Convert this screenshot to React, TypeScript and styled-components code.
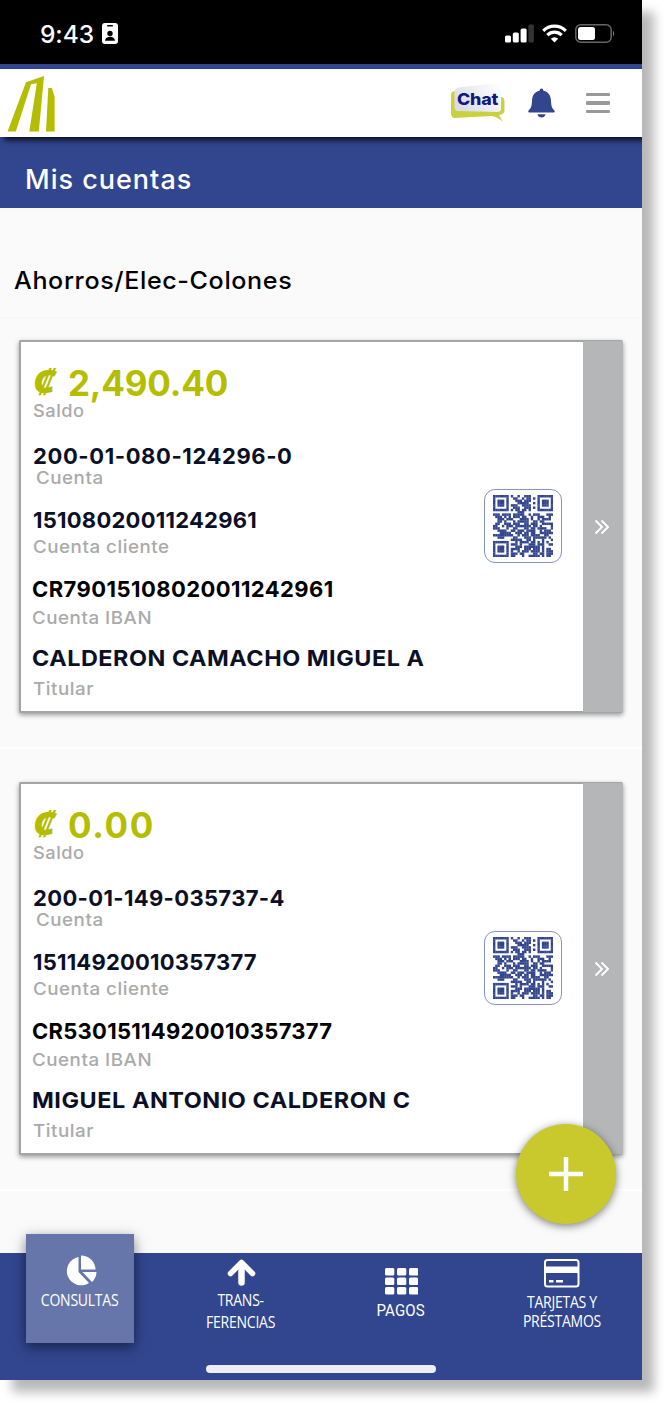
import React from 'react';
import styled, { createGlobalStyle } from 'styled-components';

const GlobalStyle = createGlobalStyle`
  * { box-sizing: border-box; }
  body { margin: 0; background: #fff; font-family: Inter, "Liberation Sans", sans-serif; overflow: hidden; }
`;

const BLUE = '#32458f';
const LIME = '#b5bd00';

const Stage = styled.div`
  width: 666px;
  height: 1404px;
`;

const Phone = styled.main`
  position: relative;
  display: flex;
  flex-direction: column;
  width: 642px;
  height: 1380px;
  background: #fafafa;
  box-shadow: 12px 12px 10px rgba(0, 0, 0, 0.28);
`;

const StatusBar = styled.div`
  display: flex;
  align-items: center;
  height: 64px;
  padding: 3px 26px 0 40px;
  background: #000;
  color: #fff;
`;

const Clock = styled.span`
  font-size: 24.5px;
  font-weight: 500;
  letter-spacing: -0.1px;
  width: 62px;
  white-space: nowrap;
`;

const StatusIcons = styled.div`
  display: flex;
  align-items: center;
  gap: 8px;
  margin-left: auto;
`;

const Header = styled.header`
  position: relative;
  z-index: 1;
  display: flex;
  align-items: center;
  height: 73px;
  padding: 0 31px 0 7px;
  border-top: 5px solid ${BLUE};
  background: #fff;
  box-shadow: 4px 3px 6px rgba(0, 0, 0, 0.85);
  clip-path: inset(0 0 -14px 0);
`;

const HeaderActions = styled.div`
  display: flex;
  align-items: center;
  margin-left: auto;
`;

const ChatBadge = styled.div`
  position: relative;
  width: 54px;
  height: 40px;
  margin-right: 23px;
`;

const ChatLabel = styled.span`
  position: absolute;
  left: 6px;
  top: 6px;
  font-size: 16.5px;
  line-height: 20px;
  font-weight: 800;
  letter-spacing: -0.2px;
  transform: scaleX(1.08);
  transform-origin: left;
  color: #10197c;
`;

const Burger = styled.div`
  display: grid;
  gap: 5px;
  width: 24px;
  margin-left: 31px;
  margin-right: 1px;
  span { height: 3.5px; border-radius: 1px; background: #999; }
`;

const TitleBar = styled.h1`
  display: flex;
  align-items: center;
  height: 71px;
  margin: 0;
  padding: 13px 0 0 25px;
  background: ${BLUE};
  color: #fff;
  font-size: 27px;
  font-weight: 500;
  letter-spacing: 1px;
`;

const SectionTitle = styled.h2`
  display: flex;
  align-items: center;
  height: 110px;
  margin: 0 0 22px;
  padding: 35px 0 0 14px;
  border-bottom: 1px solid #f5f5f5;
  color: #000;
  font-size: 24px;
  font-weight: 500;
  letter-spacing: 0.6px;
`;

const Stretch = styled.span<{ $scale: number }>`
  display: inline-block;
  transform: scaleX(${(p) => p.$scale});
  transform-origin: left;
`;

const CardSlot = styled.section`
  height: 442px;
  padding: 0 19px;
`;

const Divider = styled.hr`
  height: 2px;
  margin: 34px -19px 0;
  border: 0;
  background: #fff;
`;

const Card = styled.article`
  display: flex;
  height: 373px;
  border: 2px solid #a3a5a6;
  border-right: 0;
  border-radius: 2px;
  background: #fff;
  box-shadow: 0 2px 5px rgba(0, 0, 0, 0.4);
`;

const Details = styled.div`
  flex: 1;
  padding: 23px 0 0 10px;
`;

const Line = styled.div<{ $top?: number; $x?: number; $spacing?: number }>`
  margin-top: ${(p) => p.$top ?? 0}px;
  padding-left: ${(p) => p.$x ?? 0}px;
  letter-spacing: ${(p) => p.$spacing ?? 0}px;
  white-space: nowrap;
`;

const Balance = styled(Line)`
  display: flex;
  height: 36px;
  color: ${LIME};
  font-size: 35px;
  line-height: 36px;
  font-weight: 700;
`;

const Currency = styled.span`
  width: 36px;
  padding-left: 1px;
  font-family: "Noto Sans", sans-serif;
  font-size: 34px;
  line-height: 32px;
  font-style: italic;
  font-weight: 900;
  letter-spacing: 0;
`;

const Value = styled(Line)<{ $black?: boolean }>`
  height: 24px;
  color: ${(p) => (p.$black ? '#000' : '#0b1026')};
  font-size: 22px;
  line-height: 24px;
  font-weight: 700;
`;

const Caption = styled(Line)`
  height: 20px;
  color: #aaa;
  font-size: 17.5px;
  line-height: 20px;
  font-weight: 500;
`;

const QrButton = styled.div`
  display: grid;
  place-items: center;
  align-self: flex-start;
  width: 78px;
  height: 74px;
  margin: 147px 21px 0 0;
  border: 1px solid #8793c4;
  border-radius: 11px;
`;

const MoreStrip = styled.div`
  display: grid;
  place-items: center;
  width: 40px;
  background: #b5b6b8;
  margin: -1px 0;
  padding: 1px 2px 0 0;
`;

const Fab = styled.button`
  position: absolute;
  left: 516px;
  top: 1124px;
  display: grid;
  place-items: center;
  width: 100px;
  height: 100px;
  padding: 0;
  border: 0;
  border-radius: 50%;
  background: #c9c92e;
  box-shadow: 0 2px 9px rgba(0, 0, 0, 0.5);
`;

const Nav = styled.nav`
  display: flex;
  align-items: flex-start;
  height: 127px;
  margin-top: auto;
  background: ${BLUE};
`;

const NavItem = styled.div<{ $width: number; $top: number; $line?: number; $offset?: number }>`
  display: flex;
  flex-direction: column;
  align-items: center;
  width: ${(p) => p.$width}px;
  margin-left: ${(p) => p.$offset ?? 0}px;
  padding-top: ${(p) => p.$top}px;
  color: #fff;
  text-align: center;
  line-height: ${(p) => p.$line ?? 21.5}px;
`;

const ActiveItem = styled(NavItem)`
  height: 109px;
  margin: -19px 0 0 26px;
  background: #6776aa;
  box-shadow: 0 4px 12px rgba(0, 0, 0, 0.5);
`;

const NavLabel = styled.span<{ $gap: number; $roboto?: boolean }>`
  margin-top: ${(p) => p.$gap}px;
  font-family: ${(p) => (p.$roboto ? 'Roboto' : '"Open Sans"')}, sans-serif;
  font-size: 16.5px;
  transform: scaleX(${(p) => (p.$roboto ? 0.91 : 0.85)});
  letter-spacing: ${(p) => (p.$roboto ? '0.2px' : '-0.3px')};
  white-space: pre;
`;

const HomeIndicator = styled.div`
  position: absolute;
  left: 206px;
  bottom: 7px;
  width: 230px;
  height: 8px;
  border-radius: 4px;
  background: #efedf1;
`;

const QR_ROWS = [
  '111111101001001110001111111',
  '100000100110010110101000001',
  '101110100011101110001011101',
  '101110100001111100101011101',
  '101110101110011110001011101',
  '100000100111001110101000001',
  '111111101011011010001111111',
  '000000000001110000000000000',
  '111011110111110010111000111',
  '011101010111011001001110010',
  '001110111000111101001011110',
  '001101000101111100110110000',
  '011001110111001101110011111',
  '110010111011111110110100001',
  '111000100110001101101111001',
  '001111001101110111100101110',
  '000111110011101101100111111',
  '111111111001011101111001100',
  '001110000110001110111111010',
  '000000001111100110100010001',
  '111111100010111101101010100',
  '100000101110100011101110011',
  '101110100011101111111010000',
  '101110101111001110111010110',
  '101110101001011101111010111',
  '100000101110110000110110111',
  '111111101100010011111010110',
];

const QrCode = () => (
  <svg width="60" height="62" viewBox="0 0 27 27" preserveAspectRatio="none">
    {QR_ROWS.flatMap((row, y) =>
      [...row].map((cell, x) =>
        cell === '1' ? <rect key={`${x}-${y}`} x={x} y={y} width="1.08" height="1.08" fill={BLUE} /> : null,
      ),
    )}
  </svg>
);

type Row = { value: string; label: string; spacing: number; scale?: number; top: number; gap: number; x: number; lx: number; black?: boolean };
type Account = { balance: string; balanceSpacing: number; rows: Row[] };

const accounts: Account[] = [
  {
    balance: '2,490.40',
    balanceSpacing: -0.2,
    rows: [
      { value: '200-01-080-124296-0', label: 'Cuenta', spacing: 0.6, top: 23, gap: 0, x: 2, lx: 5 },
      { value: '15108020011242961', label: 'Cuenta cliente', spacing: 0.24, top: 20, gap: 5, x: 2, lx: 2 },
      { value: 'CR79015108020011242961', label: 'Cuenta IBAN', spacing: 0.43, top: 20, gap: 7, x: 1, lx: 1, black: true },
      { value: 'CALDERON CAMACHO MIGUEL A', label: 'Titular', spacing: 0.5, scale: 1.0625, top: 18, gap: 9, x: 1, lx: 2 },
    ],
  },
  {
    balance: '0.00',
    balanceSpacing: 1.6,
    rows: [
      { value: '200-01-149-035737-4', label: 'Cuenta', spacing: 0.35, top: 23, gap: 0, x: 2, lx: 5 },
      { value: '15114920010357377', label: 'Cuenta cliente', spacing: 0.2, top: 20, gap: 5, x: 2, lx: 2 },
      { value: 'CR53015114920010357377', label: 'Cuenta IBAN', spacing: 0.28, top: 20, gap: 7, x: 1, lx: 1, black: true },
      { value: 'MIGUEL ANTONIO CALDERON C', label: 'Titular', spacing: 0.5, scale: 1.065, top: 18, gap: 9, x: 1, lx: 2 },
    ],
  },
];

const AccountCard = ({ account }: { account: Account }) => (
  <CardSlot>
    <Card>
      <Details>
        <Balance $spacing={account.balanceSpacing} $x={1}>
          <Currency><Stretch $scale={1.1}>₡</Stretch></Currency>
          {account.balance}
        </Balance>
        <Caption $spacing={0.5} $x={2}><Stretch $scale={1.04}>Saldo</Stretch></Caption>
        {account.rows.map((row) => (
          <React.Fragment key={row.label}>
            <Value $top={row.top} $x={row.x} $spacing={row.spacing} $black={row.black}>
              <Stretch $scale={row.scale ?? 1}>{row.value}</Stretch>
            </Value>
            <Caption $top={row.gap} $x={row.lx} $spacing={0.5}>
              <Stretch $scale={1.07}>{row.label}</Stretch>
            </Caption>
          </React.Fragment>
        ))}
      </Details>
      <QrButton><QrCode /></QrButton>
      <MoreStrip>
        <svg width="16" height="16" viewBox="0 0 16 16" fill="none" stroke="#fff" strokeWidth="1.9">
          <path d="M1.5 1.5 8 8l-6.500 6.500M7.500 1.500 14 8l-6.500 6.500" />
        </svg>
      </MoreStrip>
    </Card>
    <Divider />
  </CardSlot>
);

export default function App() {
  return (
    <Stage>
      <GlobalStyle />
      <Phone>
        <StatusBar>
          <Clock>9:43</Clock>
          <svg width="16" height="21" viewBox="0 0 16 21">
            <rect width="16" height="21" rx="3" fill="#fff" />
            <rect x="5" y="2" width="6" height="1.500" rx=".7" fill="#000" />
            <circle cx="8" cy="10.500" r="2.700" fill="#000" />
            <path d="M3 17.800c.3-3 2.500-4 5-4s4.700 1 5 4z" fill="#000" />
          </svg>
          <StatusIcons>
            <svg width="29" height="19" viewBox="0 0 29 19" fill="#fff">
              <rect x="0" y="11.500" width="6" height="7" rx="1.500" />
              <rect x="7.800" y="8.500" width="6" height="10" rx="1.500" />
              <rect x="15.600" y="4.500" width="6" height="14" rx="1.500" />
              <rect x="23.400" y="0.500" width="5.500" height="18" rx="1.500" fill="#333" />
            </svg>
            <svg width="25" height="19" viewBox="0 0 25 19" fill="none" stroke="#fff" strokeWidth="3.200">
              <path d="M1.200 6.800a16 16 0 0 1 22.600 0" />
              <path d="M5.300 11.100a10.200 10.200 0 0 1 14.400 0" />
              <path d="M12.500 18.500 8.800 14.700a5.300 5.300 0 0 1 7.400 0z" fill="#fff" stroke="none" />
            </svg>
            <svg width="41" height="19" viewBox="0 0 41 19">
              <rect x=".8" y=".8" width="35.400" height="17.400" rx="5" fill="none" stroke="#666" strokeWidth="1.500" />
              <rect x="3" y="3" width="17" height="13" rx="2.500" fill="#fff" />
              <path d="M38 6.500q2.500 3 0 6z" fill="#777" />
            </svg>
          </StatusIcons>
        </StatusBar>
        <Header>
          <svg width="50" height="58" viewBox="0 0 50 58" fill={LIME}>
            <path fillRule="evenodd" d="M.5 57.500 19 8.200 37 2 31.800 57.500H22.300L29.800 9.200 24 10.300 8.800 57.500z" />
            <path d="M41.300 14h3.500l2.800 8.700v34.800H39z" />
          </svg>
          <HeaderActions>
            <ChatBadge>
              <svg width="54" height="40" viewBox="0 0 54 40">
                <defs>
                  <linearGradient id="bubble" x1="0" y1=".6" x2="1" y2="0">
                    <stop offset="0" stopColor="#d9dbe9" />
                    <stop offset=".6" stopColor="#f3f3f8" />
                    <stop offset="1" stopColor="#fff" />
                  </linearGradient>
                </defs>
                <path d="M4 8 1 9q-1 1-1 3v18q0 5 4 5l36-2q6 .5 12 6l-4-7q5-1 5.500-4V18q0-3-3-4z" fill="#c9d13f" />
                <path d="M8 4.500 46 0q4 0 4 4v22q0 3-4 3L7 28q-3.500 0-3.500-4V9.500q0-4.500 4.500-5z" fill="url(#bubble)" />
              </svg>
              <ChatLabel>Chat</ChatLabel>
            </ChatBadge>
            <svg width="27" height="30" viewBox="0 0 27 30" fill={BLUE}>
              <path d="M13.500.5q1.700 0 2 2.200c5 1 7.300 4.800 7.500 10 .2 5.300 1 7.300 3 9.300 1.300 1.300.8 2.500-.8 2.500H1.800C.2 24.500-.3 23.300 1 22c2-2 2.800-4 3-9.300.2-5.200 2.500-9 7.500-10q.3-2.200 2-2.200z" />
              <path d="M9.500 26.300h8q-.8 3.200-4 3.200t-4-3.200z" />
            </svg>
            <Burger><span /><span /><span /></Burger>
          </HeaderActions>
        </Header>
        <TitleBar>Mis cuentas</TitleBar>
        <SectionTitle><Stretch $scale={1.045}>Ahorros/Elec-Colones</Stretch></SectionTitle>
        {accounts.map((a) => <AccountCard key={a.balance} account={a} />)}
        <Nav>
          <ActiveItem $width={108} $top={21}>
            <svg width="33" height="32" viewBox="0 0 33 32" fill="#fff">
              <path d="M14.500 2v15l10.500 11A14.300 14.300 0 1 1 14.500 2z" />
              <path d="M17 .5A14.500 14.500 0 0 1 31.500 14.500H17z" />
              <path d="M18.500 17H32.500a14.500 14.500 0 0 1-4.500 10z" />
            </svg>
            <NavLabel $gap={2}>CONSULTAS</NavLabel>
          </ActiveItem>
          <NavItem $width={214} $top={5}>
            <svg width="29" height="29" viewBox="0 0 29 29" fill="none" stroke="#fff" strokeWidth="6.500" strokeLinejoin="round" strokeLinecap="round">
              <path d="M14.500 6v18.500" />
              <path d="M3.500 15.500 14.500 4.500 25.500 15.500" strokeWidth="5.500" />
            </svg>
            <NavLabel $gap={2}>{'TRANS-\nFERENCIAS'}</NavLabel>
          </NavItem>
          <NavItem $width={106} $top={15}>
            <svg width="33" height="27" viewBox="0 0 33 27" fill="#fff">
              {[0, 9.5, 19].map((y) => [0, 12, 24].map((x) => (
                <rect key={`${x}-${y}`} x={x} y={y} width="9.300" height="7.600" rx="1.500" />
              )))}
            </svg>
            <NavLabel $gap={5} $roboto>PAGOS</NavLabel>
          </NavItem>
          <NavItem $width={160} $top={6} $line={18.5} $offset={28}>
            <svg width="36" height="29" viewBox="0 0 36 29">
              <rect x="1" y="1" width="33.500" height="26.500" rx="2.500" fill="none" stroke="#fff" strokeWidth="2" />
              <path d="M1 7.500h34v6.500H1zM5 21h4.500v2.500H5zM12 21h7v2.500h-7z" fill="#fff" />
            </svg>
            <NavLabel $gap={5}>{'TARJETAS Y\nPRÉSTAMOS'}</NavLabel>
          </NavItem>
        </Nav>
        <Fab aria-label="Agregar">
          <svg width="34" height="34" viewBox="0 0 34 34" stroke="#fff" strokeWidth="4.500">
            <path d="M17 0v34M0 17h34" />
          </svg>
        </Fab>
        <HomeIndicator />
      </Phone>
    </Stage>
  );
}
